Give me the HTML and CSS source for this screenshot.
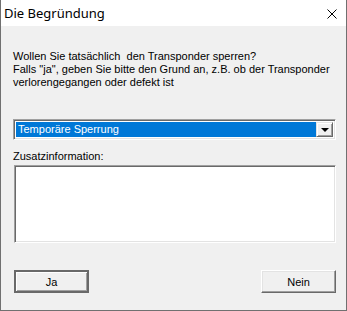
FILE: index.html
```html
<!DOCTYPE html>
<html lang="de">
<head>
    <meta charset="UTF-8">
    <title>Die Begründung</title>
    <link rel="stylesheet" href="styles.css">
</head>
<body>

    <div class="window">
        <div class="titlebar">
            <span class="title">Die Begründung</span>
            <span class="close">
                <svg width="10" height="10" viewBox="0 0 10 10">
                    <path d="M0.5 0.5 L9.5 9.5 M9.5 0.5 L0.5 9.5" stroke="#000" stroke-width="1" fill="none"/>
                </svg>
            </span>
        </div>

        <div class="content">
            <p class="question">Wollen Sie tatsächlich&nbsp; den Transponder sperren?<br>
            Falls "ja", geben Sie bitte den Grund an, z.B. ob der Transponder<br>
            verlorengegangen oder defekt ist</p>

            <div class="combo">
                <div class="combo-value">Temporäre Sperrung</div>
                <div class="combo-btn"><span class="arrow"></span></div>
            </div>

            <label class="field-label">Zusatzinformation:</label>
            <div class="memo"></div>

            <div class="buttons">
                <button type="button" class="btn btn-default">Ja</button>
                <button type="button" class="btn">Nein</button>
            </div>
        </div>
    </div>

</body>
</html>
```

FILE: styles.css
```css
body {
    margin: 0;
    background: #f0f0f0;
}
.window {
    width: 347px;
    height: 311px;
    box-sizing: border-box;
    border: 1px solid #707070;
    border-top: none;
    background: #f0f0f0;
    display: flex;
    flex-direction: column;
}
.titlebar {
    height: 26px;
    background: #fff;
    display: flex;
    align-items: center;
    justify-content: space-between;
    padding: 0 9px 0 3px;
}
.title {
    font-family: "Noto Sans", sans-serif;
    font-size: 13px;
    color: #000;
    margin-top: -1px;
}
.close {
    display: flex;
    margin-top: 1px;
}
.content {
    padding: 24px 10px 0 12px;
    font-family: "Liberation Sans", Arial, sans-serif;
    font-size: 11px;
    line-height: 13px;
    color: #000;
}
.question {
    margin: 0 0 30px 0;
}
.combo {
    height: 21px;
    box-sizing: border-box;
    border: 1px solid;
    border-color: #a0a0a0 #fff #fff #a0a0a0;
    box-shadow: inset 1px 1px #696969, inset -1px -1px #e3e3e3;
    background: #fff;
    display: flex;
    padding: 2px;
}
.combo-value {
    flex: 1;
    background: #0078d7;
    color: #fff;
    padding-left: 2px;
    line-height: 15px;
    outline: 1px solid #fff;
}
.combo-btn {
    width: 17px;
    background: #f0f0f0;
    box-sizing: border-box;
    border: 1px solid;
    border-color: #e3e3e3 #696969 #696969 #e3e3e3;
    box-shadow: inset 1px 1px #fff, inset -1px -1px #a0a0a0;
    display: flex;
    align-items: center;
    justify-content: center;
}
.arrow {
    width: 0;
    height: 0;
    border-left: 4px solid transparent;
    border-right: 4px solid transparent;
    border-top: 4px solid #000;
    margin-top: 1px;
}
.field-label {
    display: block;
    margin-top: 10px;
}
.memo {
    margin: 2px 0 0 1px;
    height: 78px;
    box-sizing: border-box;
    border: 1px solid;
    border-color: #a0a0a0 #fff #fff #a0a0a0;
    box-shadow: inset 1px 1px #696969, inset -1px -1px #e3e3e3;
    background: #fff;
}
.buttons {
    display: flex;
    justify-content: space-between;
    margin: 27px 0 0 1px;
}
.btn {
    width: 75px;
    height: 23px;
    box-sizing: border-box;
    font-family: "Liberation Sans", Arial, sans-serif;
    font-size: 11px;
    color: #000;
    background: #f0f0f0;
    border: 1px solid;
    border-color: #fff #696969 #696969 #fff;
    box-shadow: inset -1px -1px #a0a0a0, inset 1px 1px #e3e3e3;
    padding: 0;
    cursor: pointer;
}
.btn-default {
    border: 2px solid #696969;
    box-shadow: inset 1px 1px #fff, inset -1px -1px #a0a0a0;
}
```
